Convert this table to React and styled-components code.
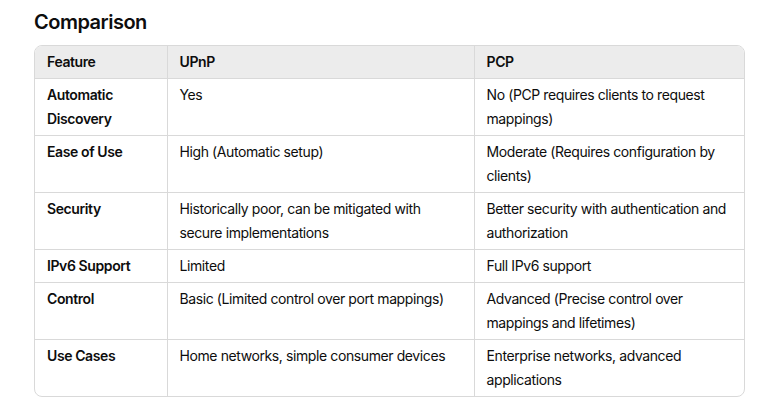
import React from 'react'
import styled, { createGlobalStyle } from 'styled-components'

const GlobalStyle = createGlobalStyle`
  html, body {
    margin: 0;
    padding: 0;
    background: #ffffff;
  }
  body {
    font-family: Inter, "Noto Sans", sans-serif;
    color: #0d0d0d;
    -webkit-font-smoothing: antialiased;
  }
`

const rows = [
  ['Automatic Discovery', 'Yes', 'No (PCP requires clients to request mappings)'],
  ['Ease of Use', 'High (Automatic setup)', 'Moderate (Requires configuration by clients)'],
  ['Security', 'Historically poor, can be mitigated with secure implementations', 'Better security with authentication and authorization'],
  ['IPv6 Support', 'Limited', 'Full IPv6 support'],
  ['Control', 'Basic (Limited control over port mappings)', 'Advanced (Precise control over mappings and lifetimes)'],
  ['Use Cases', 'Home networks, simple consumer devices', 'Enterprise networks, advanced applications'],
]

function App () {
  return (
    <Page>
      <GlobalStyle/>
      <Title>Comparison</Title>
      <TableWrap>
        <Table>
          <colgroup>
            <col style={{ width: 132 }}/>
            <col style={{ width: 307 }}/>
            <col/>
          </colgroup>
          <thead>
            <tr>
              <HeadCell>Feature</HeadCell>
              <HeadCell>UPnP</HeadCell>
              <HeadCell>PCP</HeadCell>
            </tr>
          </thead>
          <tbody>
            {rows.map(([feature, upnp, pcp]) => (
              <tr key={feature}>
                <Cell bold>{feature}</Cell>
                <Cell>{upnp}</Cell>
                <Cell>{pcp}</Cell>
              </tr>
            ))}
          </tbody>
        </Table>
      </TableWrap>
    </Page>
  )
}

const Page = styled.div`
  padding: 9px 22px 0 34px;
`

const Title = styled.h3`
  margin: 0 0 10px;
  font-size: 20px;
  line-height: 26px;
  font-weight: 600;
  letter-spacing: -0.5px;
`

const TableWrap = styled.div`
  border: 1px solid #d9d9d9;
  border-radius: 8px;
  overflow: hidden;
`

const Table = styled.table`
  width: 100%;
  table-layout: fixed;
  border-collapse: collapse;
  font-size: 14px;
  line-height: 24px;
  letter-spacing: -0.4px;
`

const HeadCell = styled.th`
  background: #ececec;
  text-align: left;
  font-weight: 600;
  padding: 4px 12px;
  border-bottom: 1px solid #d9d9d9;
  border-left: 1px solid #d9d9d9;

  &:first-child {
    border-left: none;
  }
`

const Cell = styled.td`
  padding: 4px 12px;
  vertical-align: top;
  font-weight: ${p => (p.bold ? 600 : 400)};
  border-left: 1px solid #d9d9d9;
  border-top: 1px solid #d9d9d9;

  &:first-child {
    border-left: none;
  }

  tr:first-child > & {
    border-top: none;
  }
`

export default App
